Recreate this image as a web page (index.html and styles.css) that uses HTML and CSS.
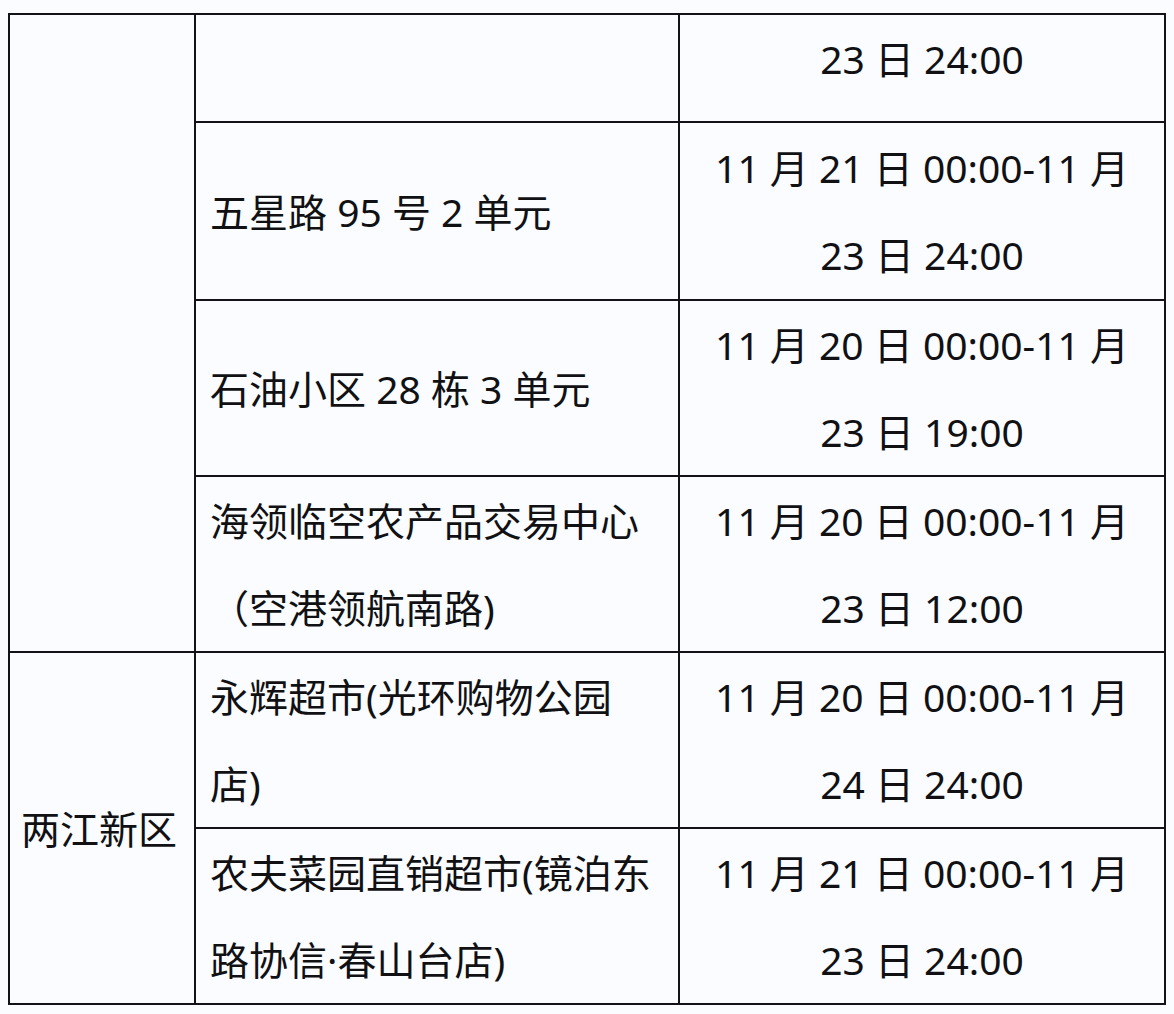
FILE: index.html
```html
<!DOCTYPE html>
<html lang="zh-CN">
<head>
<meta charset="utf-8">
<title>表格</title>
<link rel="stylesheet" href="styles.css">
</head>
<body>
<table class="grid">
  <colgroup>
    <col class="c1">
    <col class="c2">
    <col class="c3">
  </colgroup>
  <tr class="first">
    <td class="district" rowspan="4"></td>
    <td class="place"></td>
    <td class="time">23 日 24:00</td>
  </tr>
  <tr class="second">
    <td class="place">五星路 95 号 2 单元</td>
    <td class="time">11 月 21 日 00:00-11 月<br>23 日 24:00</td>
  </tr>
  <tr>
    <td class="place">石油小区 28 栋 3 单元</td>
    <td class="time">11 月 20 日 00:00-11 月<br>23 日 19:00</td>
  </tr>
  <tr>
    <td class="place">海领临空农产品交易中心<br>（空港领航南路)</td>
    <td class="time">11 月 20 日 00:00-11 月<br>23 日 12:00</td>
  </tr>
  <tr>
    <td class="district" rowspan="2">两江新区</td>
    <td class="place">永辉超市(光环购物公园<br>店)</td>
    <td class="time">11 月 20 日 00:00-11 月<br>24 日 24:00</td>
  </tr>
  <tr>
    <td class="place">农夫菜园直销超市(镜泊东<br>路协信·春山台店)</td>
    <td class="time">11 月 21 日 00:00-11 月<br>23 日 24:00</td>
  </tr>
</table>
</body>
</html>
```

FILE: styles.css
```css
html, body {
  margin: 0;
  padding: 0;
  background: #fafcff;
}

body {
  padding: 13px 0 0 8px;
  font-family: "Noto Sans", "Noto Sans CJK SC", sans-serif;
  color: #111114;
}

.grid {
  border-collapse: collapse;
  table-layout: fixed;
  width: 1156px;
}

.c1 { width: 186px; }
.c2 { width: 484px; }
.c3 { width: 486px; }

.grid td {
  border: 2px solid #121218;
  padding: 0;
  font-size: 39px;
  line-height: 87px;
  vertical-align: middle;
  white-space: nowrap;
}

.grid tr.first td {
  height: 106px;
  vertical-align: top;
}

.grid tr.second td {
  height: 176px;
}

.place {
  padding-left: 14px !important;
  text-align: left;
}

.time {
  text-align: center;
}

.district {
  padding-left: 11px !important;
  text-align: left;
}
```
